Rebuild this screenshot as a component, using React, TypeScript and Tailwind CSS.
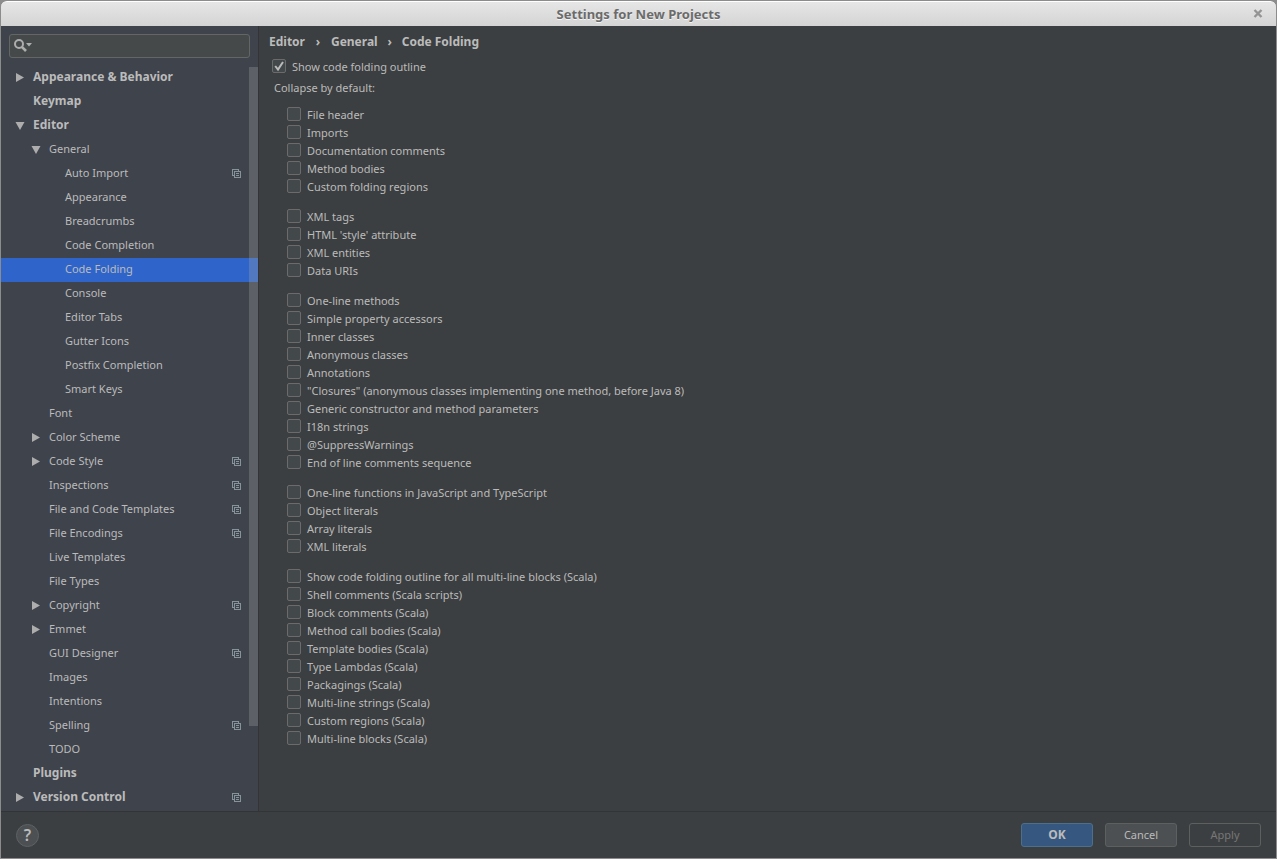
import React from "react";

type Item = {
  label: string;
  level: 0 | 1 | 2;
  arrow?: "open" | "closed";
  project?: boolean;
  selected?: boolean;
};

const items: Item[] = [
  { label: "Appearance & Behavior", level: 0, arrow: "closed" },
  { label: "Keymap", level: 0 },
  { label: "Editor", level: 0, arrow: "open" },
  { label: "General", level: 1, arrow: "open" },
  { label: "Auto Import", level: 2, project: true },
  { label: "Appearance", level: 2 },
  { label: "Breadcrumbs", level: 2 },
  { label: "Code Completion", level: 2 },
  { label: "Code Folding", level: 2, selected: true },
  { label: "Console", level: 2 },
  { label: "Editor Tabs", level: 2 },
  { label: "Gutter Icons", level: 2 },
  { label: "Postfix Completion", level: 2 },
  { label: "Smart Keys", level: 2 },
  { label: "Font", level: 1 },
  { label: "Color Scheme", level: 1, arrow: "closed" },
  { label: "Code Style", level: 1, arrow: "closed", project: true },
  { label: "Inspections", level: 1, project: true },
  { label: "File and Code Templates", level: 1, project: true },
  { label: "File Encodings", level: 1, project: true },
  { label: "Live Templates", level: 1 },
  { label: "File Types", level: 1 },
  { label: "Copyright", level: 1, arrow: "closed", project: true },
  { label: "Emmet", level: 1, arrow: "closed" },
  { label: "GUI Designer", level: 1, project: true },
  { label: "Images", level: 1 },
  { label: "Intentions", level: 1 },
  { label: "Spelling", level: 1, project: true },
  { label: "TODO", level: 1 },
  { label: "Plugins", level: 0 },
  { label: "Version Control", level: 0, arrow: "closed", project: true },
];

const groups: string[][] = [
  ["File header", "Imports", "Documentation comments", "Method bodies", "Custom folding regions"],
  ["XML tags", "HTML 'style' attribute", "XML entities", "Data URIs"],
  [
    "One-line methods",
    "Simple property accessors",
    "Inner classes",
    "Anonymous classes",
    "Annotations",
    "\"Closures\" (anonymous classes implementing one method, before Java 8)",
    "Generic constructor and method parameters",
    "I18n strings",
    "@SuppressWarnings",
    "End of line comments sequence",
  ],
  ["One-line functions in JavaScript and TypeScript", "Object literals", "Array literals", "XML literals"],
  [
    "Show code folding outline for all multi-line blocks (Scala)",
    "Shell comments (Scala scripts)",
    "Block comments (Scala)",
    "Method call bodies (Scala)",
    "Template bodies (Scala)",
    "Type Lambdas (Scala)",
    "Packagings (Scala)",
    "Multi-line strings (Scala)",
    "Custom regions (Scala)",
    "Multi-line blocks (Scala)",
  ],
];

const indent = { 0: "pl-3.5", 1: "pl-[30px]", 2: "pl-[46px]" };

function Arrow({ kind }: { kind?: "open" | "closed" }) {
  return (
    <svg className="mr-2 size-2.5 shrink-0 fill-[#adadad]" viewBox="0 0 10 10" aria-hidden="true">
      {kind === "closed" && <path d="M1 0 L9 4.5 L1 9 Z" />}
      {kind === "open" && <path d="M0.5 1 H9.5 L5 9 Z" />}
    </svg>
  );
}

function ProjectIcon() {
  return (
    <svg className="size-2.5 shrink-0" viewBox="0 0 10 10" fill="none" stroke="#87939a" shapeRendering="crispEdges" aria-hidden="true">
      <path d="M2.5 6.5 H0.5 V0.5 H6.5 V2.5" />
      <path d="M2.5 2.5 H8.5 V8.5 H2.5 Z M4 4.5 H7 M4 6.5 H7" />
    </svg>
  );
}

function Check({ label, checked = false }: { label: string; checked?: boolean }) {
  return (
    <label className="flex h-[18px] w-fit items-center gap-1.5">
      <span className="relative -mt-0.5 size-3.5 shrink-0">
        <input
          type="checkbox"
          defaultChecked={checked}
          className="peer block size-3.5 appearance-none rounded-[2px] border border-[#6b6b6b] bg-[#43494a]"
        />
        <svg
          className="pointer-events-none absolute inset-0 hidden size-3.5 peer-checked:block"
          viewBox="0 0 14 14"
          fill="none"
          stroke="#bbbbbb"
          strokeWidth="2"
          aria-hidden="true"
        >
          <path d="M3.2 7 L6 10.5 L11 3" />
        </svg>
      </span>
      <span className="whitespace-nowrap">{label}</span>
    </label>
  );
}

function TitleBar() {
  return (
    <header className="flex h-[25px] items-center rounded-t-md border-t border-white bg-linear-to-b from-[#e6e6e6] to-[#d4d4d4] px-2.5">
      <span className="w-4" />
      <h1 className="flex-1 pt-0.5 text-center text-[13px] font-bold text-[#6b6b6b] [text-shadow:0_1px_0_#f4f4f4]">
        Settings for New Projects
      </h1>
      <button type="button" aria-label="Close" className="flex w-4 justify-center">
        <svg className="size-2.5" viewBox="0 0 10 10" fill="none" stroke="#949494" strokeWidth="2.4" aria-hidden="true">
          <path d="M1.5 1 L8.5 8 M8.5 1 L1.5 8" />
        </svg>
      </button>
    </header>
  );
}

function Sidebar() {
  return (
    <aside className="relative w-[258px] shrink-0 border-r border-[#323436] bg-[#3f434c]">
      <div className="px-2 pt-2">
        <label className="flex h-6 w-[241px] items-center rounded-[3px] border border-[#646666] bg-[#45494a] pl-1">
          <svg className="mr-1 h-3.5 w-[18px] shrink-0" viewBox="0 0 18 14" aria-hidden="true">
            <circle cx="5" cy="5" r="4" fill="none" stroke="#adadad" strokeWidth="2" />
            <path d="M7.8 7.8 L12 12" stroke="#adadad" strokeWidth="2.6" />
            <path d="M12 4 H18 L15 7.5 Z" fill="#adadad" />
          </svg>
          <input type="text" aria-label="Search settings" className="min-w-0 flex-1 bg-transparent outline-none" />
        </label>
      </div>
      <nav className="mt-2">
        {items.map((it) => (
          <a
            key={it.label + it.level}
            href="#"
            className={`flex h-6 items-center pr-4 ${indent[it.level]} ${it.selected ? "bg-[#2f65ca]" : ""}`}
          >
            <Arrow kind={it.arrow} />
            <span className={`flex-1 whitespace-nowrap pb-0.5 ${it.level === 0 ? "text-[12px] font-bold" : ""}`}>
              {it.label}
            </span>
            {it.project && <ProjectIcon />}
          </a>
        ))}
      </nav>
      <div className="absolute right-0 top-[41px] h-[659px] w-[9px] bg-[#a6a6a6]/30" />
    </aside>
  );
}

function Content() {
  return (
    <main className="flex-1 px-2.5 pt-1.5">
      <nav className="flex h-5 items-center gap-2 text-[12px] font-bold" aria-label="Breadcrumb">
        <a href="#">Editor</a>
        <span className="w-2.5 text-center">›</span>
        <a href="#">General</a>
        <span className="w-2 text-center">›</span>
        <span>Code Folding</span>
      </nav>
      <div className="mt-1.5 pl-[3px]">
        <Check label="Show code folding outline" checked />
        <p className="mt-[3px] pl-0.5 leading-[18px]">Collapse by default:</p>
      </div>
      <div className="mt-[9px] flex flex-col gap-3 pl-[18px]">
        {groups.map((g) => (
          <div key={g[0]}>
            {g.map((label) => (
              <Check key={label} label={label} />
            ))}
          </div>
        ))}
      </div>
    </main>
  );
}

function Footer() {
  const base = "h-6 w-[72px] rounded-[3px] border";
  return (
    <footer className="flex h-[47px] items-center border-t border-[#323436] px-[15px]">
      <button
        type="button"
        aria-label="Help"
        className="flex size-[23px] items-center justify-center rounded-full border border-[#5e6264] bg-[#4c5052] text-[16px] leading-none font-semibold"
      >
        ?
      </button>
      <div className="ml-auto flex gap-3">
        <button type="button" className={`${base} border-[#4c708c] bg-[#365880] text-[12px] font-bold`}>OK</button>
        <button type="button" className={`${base} border-[#5e6060] bg-[#4c5052]`}>Cancel</button>
        <button type="button" disabled className={`${base} border-[#5e6060] text-[#777777]`}>Apply</button>
      </div>
    </footer>
  );
}

export default function App() {
  return (
    <div className="min-h-screen bg-[#8c8c8c] pt-px font-['Noto_Sans',sans-serif] text-[11px] text-[#bbbbbb]">
      <div className="flex min-h-[calc(100vh-1px)] flex-col border-x border-b border-[#8c8c8c]">
        <TitleBar />
        <div className="flex flex-1 flex-col bg-[#3c3f41]">
          <div className="flex flex-1">
            <Sidebar />
            <Content />
          </div>
          <Footer />
        </div>
      </div>
    </div>
  );
}
